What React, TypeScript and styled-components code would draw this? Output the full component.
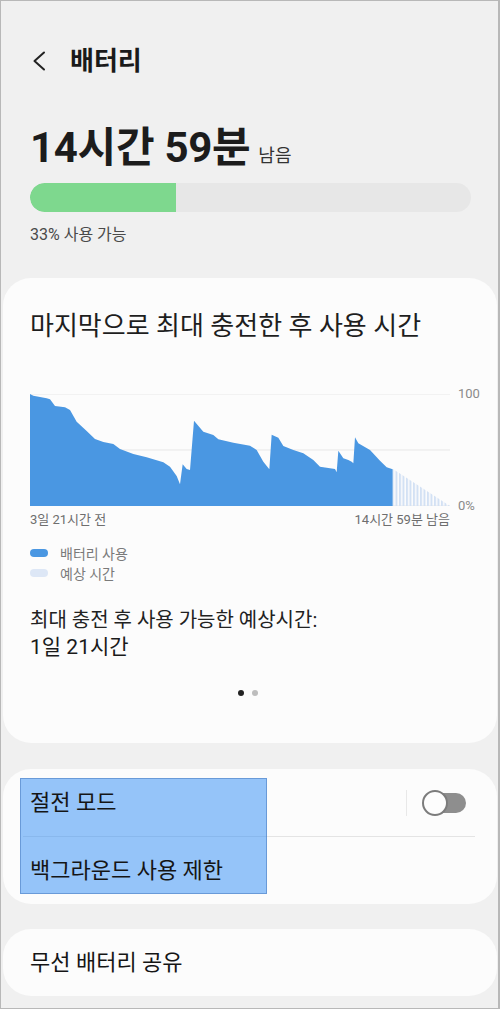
import React from 'react';
import styled, { createGlobalStyle } from 'styled-components';

const GlobalStyle = createGlobalStyle`
  html, body {
    margin: 0;
    padding: 0;
    background: #f0f0f0;
  }
  * {
    box-sizing: border-box;
  }
`;

const Page = styled.div`
  width: 500px;
  height: 1009px;
  overflow: hidden;
  border: 1px solid #b8b8b8;
  border-right-width: 2px;
  background: #f0f0f0;
  font-family: Roboto, "Noto Sans CJK KR", sans-serif;
  color: #1c1c1c;
  display: flex;
  flex-direction: column;
`;

const Header = styled.header`
  display: flex;
  align-items: center;
  height: 40px;
  margin-top: 40px;
  padding-left: 29px;
  gap: 22px;
`;

const BackButton = styled.button`
  border: none;
  background: none;
  padding: 0;
  width: 18px;
  height: 24px;
  display: flex;
  align-items: center;
  justify-content: center;
`;

const Title = styled.h1`
  margin: 0;
  font-size: 26px;
  font-weight: 700;
  line-height: 40px;
  color: #1a1a1a;
`;

const Summary = styled.section`
  padding: 0 29px 0 29px;
  margin-top: 43px;
`;

const Remaining = styled.div`
  display: flex;
  align-items: baseline;
  gap: 8px;
  height: 48px;
  line-height: 48px;
`;

const BigTime = styled.span`
  font-size: 42px;
  font-weight: 700;
  color: #1c1c1c;
  letter-spacing: -0.3px;
`;

const SmallUnit = styled.span`
  font-size: 18px;
  color: #333;
`;

const Track = styled.div`
  margin-top: 11px;
  width: 441px;
  height: 29px;
  border-radius: 15px;
  background: #e7e7e7;
  overflow: hidden;
`;

const Fill = styled.div`
  height: 100%;
  background: #7ed88e;
  border-radius: 15px 0 0 15px;
`;

const Caption = styled.div`
  margin-top: 13px;
  font-size: 16px;
  line-height: 20px;
  color: #4a4a4a;
`;

const Card = styled.section<{ mt: number }>`
  margin: ${({ mt }) => mt}px 1px 0 2px;
  background: #fcfcfc;
  border-radius: 28px;
  position: relative;
`;

const UsageCard = styled(Card)`
  padding: 33px 27px 47px 27px;
`;

const CardTitle = styled.h2`
  margin: 0;
  font-size: 26px;
  font-weight: 400;
  line-height: 30px;
  color: #1e1e1e;
`;

const ChartRow = styled.div`
  margin-top: 53px;
  display: flex;
  align-items: stretch;

  & > svg {
    flex-shrink: 0;
  }
`;

const AxisCol = styled.div`
  margin: -7px 0 -7px 8px;
  display: flex;
  flex-direction: column;
  justify-content: space-between;
  font-size: 13px;
  line-height: 14px;
  color: #8a8a8a;
  white-space: nowrap;
`;

const XLabels = styled.div`
  width: 420px;
  margin-top: 6px;
  display: flex;
  justify-content: space-between;
  font-size: 13px;
  line-height: 16px;
  color: #6e6e6e;
`;

const Legend = styled.ul`
  list-style: none;
  margin: 15px 0 0 0;
  padding: 0;
`;

const LegendItem = styled.li`
  display: flex;
  align-items: center;
  gap: 12px;
  height: 20px;
  font-size: 14px;
  color: #7a7a7a;
`;

const Swatch = styled.span<{ color: string }>`
  width: 18px;
  height: 8px;
  border-radius: 4px;
  background: ${({ color }) => color};
`;

const Estimate = styled.div`
  margin-top: 24px;
  font-size: 20px;
  line-height: 26px;
  color: #222;
`;

const EstimateValue = styled.div`
  font-size: 21px;
  line-height: 28px;
  color: #1a1a1a;
`;

const Dots = styled.div`
  margin-top: 29px;
  display: flex;
  justify-content: center;
  gap: 8px;
  padding-right: 4px;
`;

const Dot = styled.span<{ active?: boolean }>`
  width: 6px;
  height: 6px;
  border-radius: 50%;
  background: ${({ active }) => (active ? '#222' : '#bdbdbd')};
`;

const Row = styled.div`
  position: relative;
  z-index: 1;
  height: 67px;
  display: flex;
  align-items: center;
  padding: 0 31px 5px 27px;
  font-size: 22px;
  color: #151515;
`;

const RowLabel = styled.span`
  flex: 1;
`;

const Divider = styled.div`
  height: 1px;
  margin: 0 22px 0 20px;
  background: #e4e4e4;
`;

const VDivider = styled.span`
  width: 1px;
  height: 26px;
  background: #e8e8e8;
  margin: 5px 15px 0 0;
`;

const Toggle = styled.span`
  position: relative;
  width: 44px;
  height: 26px;
  display: flex;
  align-items: center;
  margin-top: 5px;
`;

const ToggleTrack = styled.span`
  margin-left: 8px;
  width: 36px;
  height: 20px;
  border-radius: 10px;
  background: #8e8e8e;
`;

const ToggleKnob = styled.span`
  position: absolute;
  left: 0;
  top: 0;
  width: 26px;
  height: 26px;
  border-radius: 50%;
  background: #fdfdfd;
  border: 2px solid #7c7c7c;
`;

const Highlight = styled.div`
  position: absolute;
  z-index: 0;
  left: 17px;
  top: 9px;
  width: 247px;
  height: 116px;
  background: rgba(45, 140, 245, 0.5);
  border: 1px solid rgba(70, 120, 190, 0.55);
  pointer-events: none;
`;

const usagePoints =
  '90,72 100,77 140,85 150,88 165,108 195,112 210,120 230,155 260,183 285,207 310,216 340,222 360,237 400,252 440,262 490,277 510,290 530,318 540,343 548,283 560,297 570,300 582,152 610,185 640,195 655,208 700,218 750,227 770,240 790,275 808,298 815,194 835,203 850,228 880,240 910,250 940,270 960,290 1005,297 1010,307 1015,242 1030,265 1045,270 1055,275 1060,280 1065,202 1075,220 1110,240 1140,272 1160,292 1178,298';

const UsageChart = () => (
  <svg width={420} height={112} viewBox="90 72 1260 336" preserveAspectRatio="none">
    <defs>
      <pattern id="hatch" width="10.5" height="10" patternUnits="userSpaceOnUse">
        <rect x="0" y="0" width="6" height="10" fill="#d3e1f4" />
      </pattern>
    </defs>
    {[72, 240, 408].map((y) => (
      <line key={y} x1={90} x2={1350} y1={y} y2={y} stroke="#e7e7e7" strokeWidth={1} vectorEffect="non-scaling-stroke" />
    ))}
    <polygon points={`90,408 ${usagePoints} 1178,408`} fill="#4a97e2" />
    <polygon points="1180,298 1350,408 1180,408" fill="url(#hatch)" />
  </svg>
);

const App = () => (
  <>
    <GlobalStyle />
    <Page>
      <Header>
        <BackButton aria-label="back">
          <svg width="14" height="20" viewBox="0 0 14 20">
            <path d="M12 1.5 L2.5 10 L12 18.5" fill="none" stroke="#222" strokeWidth="2" strokeLinecap="round" strokeLinejoin="round" />
          </svg>
        </BackButton>
        <Title>배터리</Title>
      </Header>

      <Summary>
        <Remaining>
          <BigTime>14시간 59분</BigTime>
          <SmallUnit>남음</SmallUnit>
        </Remaining>
        <Track>
          <Fill style={{ width: '33%' }} />
        </Track>
        <Caption>33% 사용 가능</Caption>
      </Summary>

      <UsageCard mt={33}>
        <CardTitle>마지막으로 최대 충전한 후 사용 시간</CardTitle>
        <ChartRow>
          <UsageChart />
          <AxisCol>
            <span>100</span>
            <span>0%</span>
          </AxisCol>
        </ChartRow>
        <XLabels>
          <span>3일 21시간 전</span>
          <span>14시간 59분 남음</span>
        </XLabels>
        <Legend>
          <LegendItem>
            <Swatch color="#4a97e2" />
            배터리 사용
          </LegendItem>
          <LegendItem>
            <Swatch color="#dde7f6" />
            예상 시간
          </LegendItem>
        </Legend>
        <Estimate>최대 충전 후 사용 가능한 예상시간:</Estimate>
        <EstimateValue>1일 21시간</EstimateValue>
        <Dots>
          <Dot active />
          <Dot />
        </Dots>
      </UsageCard>

      <Card mt={26}>
        <Highlight />
        <Row>
          <RowLabel>절전 모드</RowLabel>
          <VDivider />
          <Toggle>
            <ToggleTrack />
            <ToggleKnob />
          </Toggle>
        </Row>
        <Divider />
        <Row>
          <RowLabel>백그라운드 사용 제한</RowLabel>
        </Row>
      </Card>

      <Card mt={25}>
        <Row>
          <RowLabel>무선 배터리 공유</RowLabel>
        </Row>
      </Card>
    </Page>
  </>
);

export default App;
